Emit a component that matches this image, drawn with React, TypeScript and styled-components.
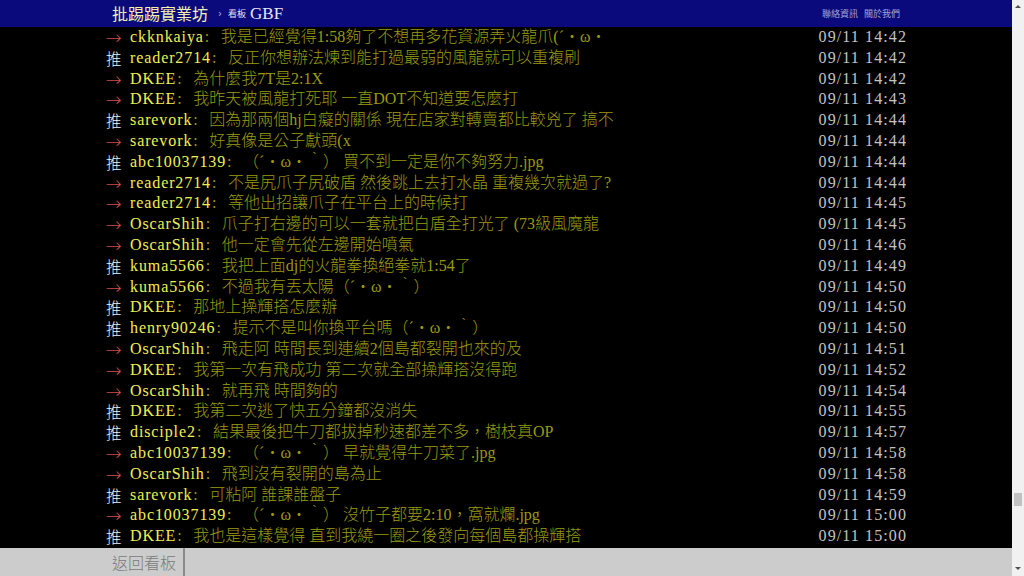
import React from "react";
import styled, { createGlobalStyle } from "styled-components";

const GlobalStyle = createGlobalStyle`
  html, body {
    margin: 0;
    padding: 0;
    background: #000;
    overflow: hidden;
  }
  body {
    font-family: "Liberation Serif", "Noto Sans CJK TC", serif;
  }
`;

interface Push {
  tag: "推" | "→";
  user: string;
  text: string;
  time: string;
}

const pushes: Push[] = [
  { tag: "→", user: "ckknkaiya", text: "我是已經覺得1:58夠了不想再多花資源弄火龍爪(´・ω・", time: "09/11 14:42" },
  { tag: "推", user: "reader2714", text: "反正你想辦法煉到能打過最弱的風龍就可以重複刷", time: "09/11 14:42" },
  { tag: "→", user: "DKEE", text: "為什麼我7T是2:1X", time: "09/11 14:42" },
  { tag: "→", user: "DKEE", text: "我昨天被風龍打死耶 一直DOT不知道要怎麼打", time: "09/11 14:43" },
  { tag: "推", user: "sarevork", text: "因為那兩個hj白癡的關係 現在店家對轉賣都比較兇了 搞不", time: "09/11 14:44" },
  { tag: "→", user: "sarevork", text: "好真像是公子獻頭(x", time: "09/11 14:44" },
  { tag: "推", user: "abc10037139", text: "（´・ω・｀） 買不到一定是你不夠努力.jpg", time: "09/11 14:44" },
  { tag: "→", user: "reader2714", text: "不是尻爪子尻破盾 然後跳上去打水晶 重複幾次就過了?", time: "09/11 14:44" },
  { tag: "→", user: "reader2714", text: "等他出招讓爪子在平台上的時候打", time: "09/11 14:45" },
  { tag: "→", user: "OscarShih", text: "爪子打右邊的可以一套就把白盾全打光了 (73級風魔龍", time: "09/11 14:45" },
  { tag: "→", user: "OscarShih", text: "他一定會先從左邊開始噴氣", time: "09/11 14:46" },
  { tag: "推", user: "kuma5566", text: "我把上面dj的火龍拳換絕拳就1:54了", time: "09/11 14:49" },
  { tag: "→", user: "kuma5566", text: "不過我有丟太陽（´・ω・｀）", time: "09/11 14:50" },
  { tag: "推", user: "DKEE", text: "那地上操輝搭怎麼辦", time: "09/11 14:50" },
  { tag: "推", user: "henry90246", text: "提示不是叫你換平台嗎（´・ω・｀）", time: "09/11 14:50" },
  { tag: "→", user: "OscarShih", text: "飛走阿 時間長到連續2個島都裂開也來的及", time: "09/11 14:51" },
  { tag: "→", user: "DKEE", text: "我第一次有飛成功 第二次就全部操輝搭沒得跑", time: "09/11 14:52" },
  { tag: "→", user: "OscarShih", text: "就再飛 時間夠的", time: "09/11 14:54" },
  { tag: "推", user: "DKEE", text: "我第二次逃了快五分鐘都沒消失", time: "09/11 14:55" },
  { tag: "推", user: "disciple2", text: "結果最後把牛刀都拔掉秒速都差不多，樹枝真OP", time: "09/11 14:57" },
  { tag: "→", user: "abc10037139", text: "（´・ω・｀） 早就覺得牛刀菜了.jpg", time: "09/11 14:58" },
  { tag: "→", user: "OscarShih", text: "飛到沒有裂開的島為止", time: "09/11 14:58" },
  { tag: "推", user: "sarevork", text: "可粘阿 誰課誰盤子", time: "09/11 14:59" },
  { tag: "→", user: "abc10037139", text: "（´・ω・｀） 沒竹子都要2:10，窩就爛.jpg", time: "09/11 15:00" },
  { tag: "推", user: "DKEE", text: "我也是這樣覺得 直到我繞一圈之後發向每個島都操輝搭", time: "09/11 15:00" },
];

const Page = styled.div`
  display: flex;
  width: 1024px;
  height: 576px;
  overflow: hidden;
`;

const Main = styled.div`
  flex: 1;
  display: flex;
  flex-direction: column;
  background: #000;
`;

const TopBar = styled.div`
  height: 27px;
  flex-shrink: 0;
  background: #0b0a7c;
`;

const Container = styled.div`
  width: 800px;
  margin: 0 auto;
`;

const TopInner = styled(Container)`
  height: 27px;
  display: flex;
  align-items: center;
  padding: 0 4px 0 6px;
  box-sizing: border-box;
`;

const Brand = styled.span`
  font-family: "Noto Sans CJK TC", sans-serif;
  font-size: 16px;
  line-height: 27px;
  color: #f2f2ae;
  margin-right: 10px;
`;

const Crumb = styled.span`
  font-family: "DejaVu Sans", sans-serif;
  font-size: 10px;
  color: #b8b8d8;
  margin-right: 6px;
`;

const BoardLabel = styled.span`
  font-family: "Noto Sans CJK TC", sans-serif;
  font-size: 9px;
  color: #e0e0f0;
  margin-right: 4px;
`;

const BoardName = styled.span`
  font-family: "Liberation Serif", serif;
  font-size: 17px;
  color: #e8e8f4;
`;

const Links = styled.div`
  margin-left: auto;
  display: flex;
  gap: 6px;
  padding-right: 2px;
  font-family: "Noto Sans CJK TC", sans-serif;
  font-size: 9px;
  color: #a4a4d4;
`;

const List = styled(Container)`
  flex: 1;
  overflow: hidden;
`;

const Row = styled.div`
  display: flex;
  height: 20.8px;
  align-items: center;
  font-size: 16px;
  line-height: 20.8px;
  white-space: nowrap;
`;

const Tag = styled.span<{ $push: boolean }>`
  display: inline-block;
  width: 24px;
  flex-shrink: 0;
  font-family: "Noto Sans CJK TC", sans-serif;
  font-size: 15.5px;
  font-weight: 300;
  color: ${(p) => (p.$push ? "#f4f4f4" : "#d24a4a")};
`;

const User = styled.span`
  color: #f0f050;
  letter-spacing: 0.9px;
`;

const Colon = styled.span`
  display: inline-block;
  width: 16px;
  padding-left: 1px;
  color: #9a9a10;
`;

const Content = styled.span`
  flex: 1;
  color: #9a9a10;
  font-weight: 300;
  overflow: hidden;
`;

const Time = styled.span`
  color: #c4c4c4;
  letter-spacing: 1.1px;
  margin-right: -1px;
`;

const Footer = styled.div`
  height: 28px;
  flex-shrink: 0;
  background: #cccccc;
`;

const FooterInner = styled(Container)`
  height: 28px;
  display: flex;
`;

const BackLink = styled.span`
  width: 79px;
  box-sizing: border-box;
  padding-left: 6px;
  border-right: 2px solid #8a8a8a;
  font-family: "Noto Sans CJK TC", sans-serif;
  font-weight: 300;
  font-size: 16px;
  line-height: 28px;
  color: #7a7a7a;
`;

const Scrollbar = styled.div`
  width: 12px;
  flex-shrink: 0;
  background: #f1f1f1;
  display: flex;
  flex-direction: column;
  align-items: center;
`;

const Arrow = styled.div<{ $down?: boolean }>`
  width: 0;
  height: 0;
  margin: ${(p) => (p.$down ? "auto 0 6px" : "5px 0 0")};
  border-left: 3px solid transparent;
  border-right: 3px solid transparent;
  ${(p) =>
    p.$down ? "border-top: 3px solid #505050;" : "border-bottom: 3px solid #505050;"}
`;

const Thumb = styled.div`
  width: 8px;
  height: 13px;
  margin-top: 485px;
  background: #c1c1c1;
`;

export default function App() {
  return (
    <Page>
      <GlobalStyle />
      <Main>
        <TopBar>
          <TopInner>
            <Brand>批踢踢實業坊</Brand>
            <Crumb>›</Crumb>
            <BoardLabel>看板</BoardLabel>
            <BoardName>GBF</BoardName>
            <Links>
              <span>聯絡資訊</span>
              <span>關於我們</span>
            </Links>
          </TopInner>
        </TopBar>
        <List>
          {pushes.map((p, i) => (
            <Row key={i}>
              <Tag $push={p.tag === "推"}>{p.tag}</Tag>
              <User>{p.user}</User>
              <Colon>:</Colon>
              <Content>{p.text}</Content>
              <Time>{p.time}</Time>
            </Row>
          ))}
        </List>
        <Footer>
          <FooterInner>
            <BackLink>返回看板</BackLink>
          </FooterInner>
        </Footer>
      </Main>
      <Scrollbar>
        <Arrow />
        <Thumb />
        <Arrow $down />
      </Scrollbar>
    </Page>
  );
}
